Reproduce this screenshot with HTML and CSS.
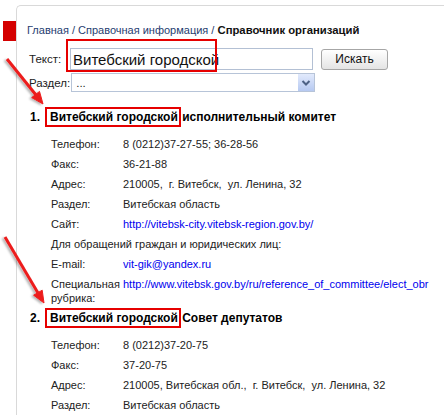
FILE: index.html
```html
<!DOCTYPE html>
<html lang="ru">

<head>
  <meta charset="UTF-8">
  <title>Справочник организаций</title>
  <meta name="viewport" content="width=device-width, initial-scale=1.0">
  <link rel="stylesheet" href="styles.css">
</head>

<body>

  <div class="page">
    <div class="panel">
      <div class="crumbs">
        <span class="crumbs-mark"></span>
        <a href="#">Главная</a> / <a href="#">Справочная информация</a> / <b>Справочник организаций</b>
      </div>

      <form class="search" onsubmit="return false">
        <div class="search-row">
          <label class="search-label" for="q">Текст:</label>
          <div class="field">
            <input type="text" id="q" value="Витебский городской">
            <span class="mark"></span>
          </div>
          <button type="button" class="search-btn">Искать</button>
        </div>
        <div class="search-row">
          <label class="search-label">Раздел:</label>
          <div class="select">
            <span>...</span>
            <span class="drop">
              <svg width="10" height="8" viewBox="0 0 10 8"><path d="M1.5 2 L5 5.5 L8.5 2" fill="none" stroke="#4d6185" stroke-width="2"/></svg>
            </span>
          </div>
        </div>
      </form>

      <ol class="orgs">
        <li class="org">
          <h3 class="org-title"><span class="num">1.</span><span class="hl">Витебский городской</span> исполнительный комитет</h3>
          <dl class="org-info">
            <div class="info-row"><dt>Телефон:</dt><dd>8 (0212)37-27-55; 36-28-56</dd></div>
            <div class="info-row"><dt>Факс:</dt><dd>36-21-88</dd></div>
            <div class="info-row"><dt>Адрес:</dt><dd>210005,&nbsp; г. Витебск,&nbsp; ул. Ленина, 32</dd></div>
            <div class="info-row"><dt>Раздел:</dt><dd>Витебская область</dd></div>
            <div class="info-row"><dt>Сайт:</dt><dd><a href="#">http://vitebsk-city.vitebsk-region.gov.by/</a></dd></div>
            <div class="info-row note">Для обращений граждан и юридических лиц:</div>
            <div class="info-row"><dt>E-mail:</dt><dd><a href="#">vit-gik@yandex.ru</a></dd></div>
            <div class="info-row"><dt>Специальная рубрика:</dt><dd><a href="#">http://www.vitebsk.gov.by/ru/reference_of_committee/elect_obr</a></dd></div>
          </dl>
        </li>
        <li class="org">
          <h3 class="org-title"><span class="num">2.</span><span class="hl">Витебский городской</span> Совет депутатов</h3>
          <dl class="org-info">
            <div class="info-row"><dt>Телефон:</dt><dd>8 (0212)37-20-75</dd></div>
            <div class="info-row"><dt>Факс:</dt><dd>37-20-75</dd></div>
            <div class="info-row"><dt>Адрес:</dt><dd>210005, Витебская обл.,&nbsp; г. Витебск,&nbsp; ул. Ленина, 32</dd></div>
            <div class="info-row"><dt>Раздел:</dt><dd>Витебская область</dd></div>
          </dl>
        </li>
      </ol>
    </div>

    <!-- arrows drawn over the screenshot -->
    <svg class="arrows" width="444" height="418" viewBox="0 0 444 418">
      <defs>
        <filter id="shade" x="-50%" y="-50%" width="200%" height="200%">
          <feDropShadow dx="-2" dy="1" stdDeviation="1" flood-color="#000" flood-opacity="0.3"/>
        </filter>
      </defs>
      <g fill="#ec1c1c" stroke="#ec1c1c" filter="url(#shade)">
        <line x1="7" y1="59" x2="36" y2="95" stroke-width="3"/>
        <polygon points="43,104 31.7,97.6 39.5,91.4" stroke-width="1"/>
        <line x1="5" y1="237" x2="38" y2="293" stroke-width="3"/>
        <polygon points="44,303 33.6,295.2 42.2,290.2" stroke-width="1"/>
      </g>
    </svg>
  </div>

</body>

</html>
```

FILE: styles.css
```css
* {
  box-sizing: border-box;
}

body {
  margin: 0;
  background: #fff;
  font-family: "Liberation Sans", Arial, sans-serif;
  color: #222;
}

a {
  text-decoration: none;
}

.page {
  position: relative;
  width: 444px;
  height: 418px;
  padding-top: 5px;
}

.panel {
  margin-left: 16px;
  padding: 16px 0 0 10px;
  border-top: 1px solid #d9d9d9;
  border-left: 1px solid #d9d9d9;
  border-top-left-radius: 5px;
}

.crumbs {
  position: relative;
  font-size: 11px;
  line-height: 16px;
  color: #1f3d70;
}

.crumbs-mark {
  position: absolute;
  left: -24px;
  top: -1px;
  width: 13px;
  height: 20px;
  background: #d40000;
}

.crumbs a {
  color: #1f3d70;
}

.crumbs b {
  font-size: 11.3px;
  color: #111;
}

.search {
  margin-top: 10px;
  padding-left: 2px;
  font-size: 11.5px;
}

.search-row {
  display: flex;
  align-items: center;
}

.search-row+.search-row {
  margin-top: 3px;
}

.search-label {
  flex: 0 0 41px;
  color: #222;
}

.field {
  position: relative;
}

.field input {
  display: block;
  width: 243px;
  height: 22px;
  padding: 0 0 0 2px;
  border: 1px solid #b3c0d4;
  font-family: "Liberation Sans", Arial, sans-serif;
  font-size: 15px;
  color: #111;
}

.field .mark {
  position: absolute;
  left: -4px;
  top: -9px;
  width: 151px;
  height: 33px;
  border: 2px solid #e60000;
}

.search-btn {
  margin-left: 8px;
  width: 67px;
  height: 21px;
  border: 1px solid #a6a6a6;
  border-radius: 3px;
  background: linear-gradient(#ffffff, #e4e4e4);
  font-family: "Liberation Sans", Arial, sans-serif;
  font-size: 12px;
  color: #111;
}

.select {
  display: flex;
  align-items: center;
  justify-content: space-between;
  margin-left: 1px;
  width: 244px;
  height: 19px;
  padding: 0 0 0 4px;
  border: 1px solid #b7c4d8;
}

.select .drop {
  display: flex;
  align-items: center;
  justify-content: center;
  width: 16px;
  height: 17px;
  background: linear-gradient(#e2eafc, #b6c9f1);
}

.orgs {
  list-style: none;
  margin: 15px 0 0;
  padding-left: 3px;
}

.org-title {
  margin: 0 0 7px;
  height: 20px;
  font-size: 12px;
  line-height: 20px;
  color: #000;
}

.org-title .num {
  display: inline-block;
  width: 15px;
  vertical-align: top;
}

.org-title .hl {
  display: inline-block;
  vertical-align: top;
  line-height: 16px;
  padding: 0 1px 0 3px;
  margin-right: -2px;
  border: 2px solid #e60000;
}

.org-info {
  margin: 0;
  padding-left: 21px;
}

.info-row {
  display: grid;
  grid-template-columns: 72px minmax(0, 1fr);
  padding: 3px 0;
  font-size: 11px;
  line-height: 14px;
}

.info-row dt,
.info-row dd {
  margin: 0;
}

.info-row dt {
  padding-right: 4px;
}

.info-row dd {
  white-space: nowrap;
  overflow: hidden;
}

.info-row.note {
  display: block;
}

.info-row a {
  color: #0000ee;
}

.arrows {
  position: absolute;
  left: 0;
  top: 0;
  pointer-events: none;
}
```
